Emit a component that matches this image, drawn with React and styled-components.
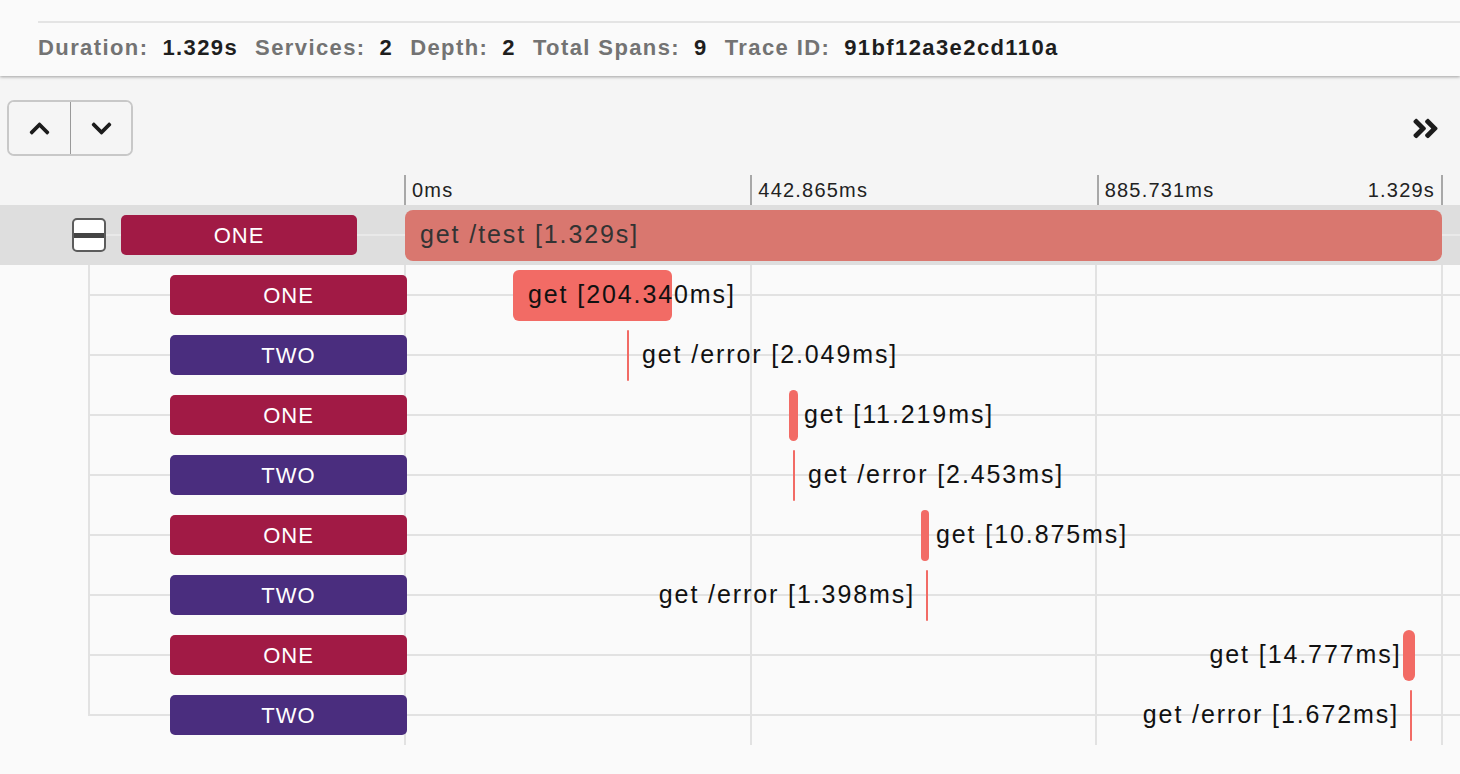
import React from 'react';
import styled, { createGlobalStyle } from 'styled-components';
import { FaChevronUp, FaChevronDown, FaAngleDoubleRight } from 'react-icons/fa';

const GlobalStyle = createGlobalStyle`
  body {
    margin: 0;
    background: #fafafa;
    font-family: 'Liberation Sans', Arial, sans-serif;
  }
`;

const TOTAL = 1329;
const LINE = '#e2e2e2';

const spans = [
  { svc: 'ONE', name: 'get /test', dur: '1.329s', start: 0, ms: 1329, root: true },
  { svc: 'ONE', name: 'get', dur: '204.340ms', start: 138.4, ms: 204.34 },
  { svc: 'TWO', name: 'get /error', dur: '2.049ms', start: 284.5, ms: 2.049 },
  { svc: 'ONE', name: 'get', dur: '11.219ms', start: 492.1, ms: 11.219 },
  { svc: 'TWO', name: 'get /error', dur: '2.453ms', start: 497.2, ms: 2.453 },
  { svc: 'ONE', name: 'get', dur: '10.875ms', start: 661.3, ms: 10.875 },
  { svc: 'TWO', name: 'get /error', dur: '1.398ms', start: 667.7, ms: 1.398 },
  { svc: 'ONE', name: 'get', dur: '14.777ms', start: 1279, ms: 14.777 },
  { svc: 'TWO', name: 'get /error', dur: '1.672ms', start: 1288, ms: 1.672 },
];

const stats = [
  ['Duration:', '1.329s'],
  ['Services:', '2'],
  ['Depth:', '2'],
  ['Total Spans:', '9'],
  ['Trace ID:', '91bf12a3e2cd110a'],
];

const ticks = ['0ms', '442.865ms', '885.731ms'];

const Page = styled.div`
  width: 1460px;
  min-height: 774px;
  background: #fafafa;
`;

const SummaryBar = styled.div`
  position: relative;
  z-index: 1;
  height: 76px;
  box-sizing: border-box;
  padding: 21px 0 0 38px;
  background: #fafafa;
  box-shadow: 0 1px 3px rgba(0, 0, 0, 0.35);
`;

const SummaryInner = styled.div`
  display: flex;
  border-top: 2px solid #e4e4e4;
  padding-top: 12px;
`;

const Stat = styled.div`
  display: flex;
  gap: 14px;
  margin-right: 17px;
  font-size: 22px;
  line-height: 26px;
  font-weight: 700;
  letter-spacing: 1.4px;
`;

const StatLabel = styled.span`
  color: #737373;
`;

const StatValue = styled.span`
  color: #1e1e1e;
`;

const Header = styled.div`
  background: #f5f5f5;
`;

const Toolbar = styled.div`
  display: flex;
  align-items: center;
  justify-content: space-between;
  padding: 24px 19px 19px 7px;
`;

const ButtonGroup = styled.div`
  display: flex;
  border: 2px solid #c8c8c8;
  border-radius: 7px;
  overflow: hidden;
`;

const NavButton = styled.button`
  display: flex;
  align-items: center;
  justify-content: center;
  width: 61px;
  height: 52px;
  padding: 0;
  border: none;
  border-left: ${(p) => (p.$divider ? '1px solid #999' : 'none')};
  background: #f5f5f5;
  color: #1c1c1c;
  cursor: pointer;
`;

const ExpandButton = styled.button`
  display: flex;
  align-items: center;
  padding: 0;
  border: none;
  background: none;
  color: #1c1c1c;
  cursor: pointer;
`;

const Axis = styled.div`
  display: flex;
  height: 30px;
`;

const AxisSpacer = styled.div`
  width: 404px;
  flex-shrink: 0;
`;

const Ticks = styled.div`
  display: grid;
  grid-template-columns: repeat(3, 1fr);
  width: 1039px;
`;

const Tick = styled.div`
  display: flex;
  justify-content: space-between;
  border-left: 2px solid #a8a8a8;
  border-right: ${(p) => (p.$last ? '2px solid #a8a8a8' : 'none')};
  padding: 0 6px 0 6px;
  font-size: 20px;
  line-height: 31px;
  letter-spacing: 1.2px;
  color: #222;
`;

const Body = styled.div`
  display: flex;
  flex-direction: column;
`;

const rowLines = (last) => `
  linear-gradient(${LINE}, ${LINE}) 88px 50% / calc(100% - 88px) 2px no-repeat,
  linear-gradient(${LINE}, ${LINE}) 88px 0 / 2px ${last ? '50%' : '100%'} no-repeat
`;

const Row = styled.div`
  display: flex;
  align-items: center;
  height: 60px;
  background: ${(p) =>
    p.$root
      ? `linear-gradient(#e9e9e9, #e9e9e9) 106px 50% / calc(100% - 106px) 2px no-repeat, #dedede`
      : rowLines(p.$last)};
`;

const LeftCell = styled.div`
  display: flex;
  align-items: center;
  gap: 15px;
  width: 404px;
  flex-shrink: 0;
  box-sizing: border-box;
  padding-left: ${(p) => p.$indent}px;
`;

const Collapse = styled.button`
  display: flex;
  align-items: center;
  width: 34px;
  height: 34px;
  padding: 0;
  box-sizing: border-box;
  border: 2px solid #5c5c5c;
  border-radius: 5px;
  background: #fff;
  cursor: pointer;
`;

const CollapseBar = styled.span`
  display: block;
  width: 100%;
  height: 5px;
  background: #444;
`;

const Badge = styled.div`
  position: relative;
  z-index: 1;
  flex-shrink: 0;
  width: ${(p) => (p.$root ? 236 : 237)}px;
  height: 40px;
  border-radius: 5px;
  background: ${(p) => (p.$svc === 'ONE' ? '#a11a45' : '#4a2d7e')};
  color: #fff;
  font-size: 22px;
  line-height: 41px;
  letter-spacing: 1px;
  text-align: center;
`;

const Track = styled.div`
  position: relative;
  width: 1039px;
  height: 100%;
  background: ${(p) =>
    p.$root
      ? 'none'
      : `linear-gradient(${LINE}, ${LINE}) 0 0 / 2px 100% no-repeat,
         linear-gradient(${LINE}, ${LINE}) 33.333% 0 / 2px 100% no-repeat,
         linear-gradient(${LINE}, ${LINE}) 66.667% 0 / 2px 100% no-repeat,
         linear-gradient(${LINE}, ${LINE}) 100% 0 / 2px 100% no-repeat`};
`;

const Bar = styled.div`
  position: absolute;
  top: 5px;
  height: 51px;
  min-width: 2px;
  border-radius: ${(p) => (p.$root ? 8 : 6)}px;
  background: ${(p) => (p.$root ? '#d9776f' : '#f26b65')};
`;

const BarLabel = styled.span`
  position: absolute;
  top: 0;
  ${(p) => (p.$side === 'left' ? 'right: 13px;' : 'left: 15px;')}
  white-space: nowrap;
  line-height: 49px;
  font-size: 25px;
  letter-spacing: 1.9px;
  color: ${(p) => (p.$root ? '#333' : '#111')};
`;

const SpanRow = ({ span, last }) => {
  const left = (span.start / TOTAL) * 1037;
  const width = Math.max(2, (span.ms / TOTAL) * 1037);
  const side = span.start / TOTAL > 0.5 ? 'left' : 'right';
  return (
    <Row $root={span.root} $last={last}>
      <LeftCell $indent={span.root ? 72 : 170}>
        {span.root && (
          <Collapse aria-label="collapse">
            <CollapseBar />
          </Collapse>
        )}
        <Badge $svc={span.svc} $root={span.root}>
          {span.svc}
        </Badge>
      </LeftCell>
      <Track $root={span.root}>
        <Bar $root={span.root} style={{ left: left + 1, width }}>
          <BarLabel $root={span.root} $side={side}>
            {span.name} [{span.dur}]
          </BarLabel>
        </Bar>
      </Track>
    </Row>
  );
};

export default function App() {
  return (
    <Page>
      <GlobalStyle />
      <SummaryBar>
        <SummaryInner>
          {stats.map(([label, value]) => (
            <Stat key={label}>
              <StatLabel>{label}</StatLabel>
              <StatValue>{value}</StatValue>
            </Stat>
          ))}
        </SummaryInner>
      </SummaryBar>
      <Header>
        <Toolbar>
          <ButtonGroup>
            <NavButton aria-label="previous">
              <FaChevronUp size={23} />
            </NavButton>
            <NavButton $divider aria-label="next">
              <FaChevronDown size={23} />
            </NavButton>
          </ButtonGroup>
          <ExpandButton aria-label="expand">
            <FaAngleDoubleRight size={31} />
          </ExpandButton>
        </Toolbar>
        <Axis>
          <AxisSpacer />
          <Ticks>
            {ticks.map((t, i) => (
              <Tick key={t} $last={i === ticks.length - 1}>
                <span>{t}</span>
                {i === ticks.length - 1 && <span>1.329s</span>}
              </Tick>
            ))}
          </Ticks>
        </Axis>
      </Header>
      <Body>
        {spans.map((s, i) => (
          <SpanRow key={i} span={s} last={i === spans.length - 1} />
        ))}
      </Body>
    </Page>
  );
}
